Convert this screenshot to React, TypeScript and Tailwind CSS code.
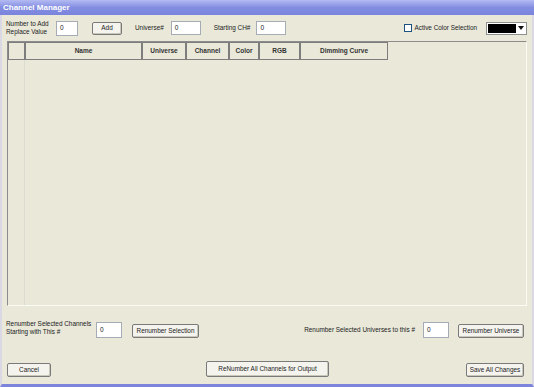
import React from "react";

const font = "font-['Liberation_Sans','Arial',sans-serif]";

function Btn({ label, className = "" }: { label: string; className?: string }) {
  return (
    <div
      className={`flex items-center justify-center whitespace-nowrap rounded-[2px] border border-[#7a7a7a] bg-[#f4f3ee] text-[6.4px] text-[#222] shadow-[inset_-1px_-1px_0_#c9c7ba] ${className}`}
    >
      {label}
    </div>
  );
}

function Field({ className = "" }: { className?: string }) {
  return (
    <div className={`flex items-center border border-[#a5acb5] bg-white pl-[3px] text-[6.5px] text-[#222] ${className}`}>
      0
    </div>
  );
}

const columns = [
  { name: "", w: "w-[17px]" },
  { name: "Name", w: "w-[117px]" },
  { name: "Universe", w: "w-[44px]" },
  { name: "Channel", w: "w-[43px]" },
  { name: "Color", w: "w-[30px]" },
  { name: "RGB", w: "w-[41px]" },
  { name: "Dimming Curve", w: "w-[88px]" },
];

export default function App() {
  return (
    <div className={`flex h-[387px] w-[534px] flex-col bg-[#e9e8d9] ${font}`}>
      {/* title bar */}
      <div className="flex h-[15px] items-center bg-gradient-to-b from-[#b4baf2] via-[#838de2] to-[#7a84dc] px-[3px] text-[8px] font-bold text-white">
        Channel Manager
      </div>

      <div className="flex flex-1 flex-col whitespace-nowrap border-x-2 border-b-[3px] border-x-[#d9d8e4] border-b-[#7c84dc] text-[6.4px] text-[#222]">
        {/* top row */}
        <div className="flex h-[26px] items-center">
          <div className="ml-[4px] w-[48px] leading-[8px]">
            Number to Add
            <br />
            Replace Value
          </div>
          <Field className="ml-[2px] h-[15px] w-[22px]" />
          <Btn label="Add" className="ml-[14px] h-[13px] w-[30px]" />
          <span className="ml-[13px]">Universe#</span>
          <Field className="ml-[7px] h-[14px] w-[30px]" />
          <span className="ml-[13px]">Starting CH#</span>
          <Field className="ml-[6px] h-[14px] w-[30px]" />
          <div className="ml-auto flex items-center">
            <div className="h-[8px] w-[8px] border border-[#1c5180] bg-white" />
            <span className="ml-[2px]">Active Color Selection</span>
          </div>
          <div className="ml-[9px] mr-[5px] flex h-[13px] w-[41px] items-center border border-[#8e8f8f] bg-white p-[1px]">
            <div className="h-full flex-1 bg-black" />
            <div className="flex h-full w-[9px] items-center justify-center">
              <svg width="6" height="4" viewBox="0 0 6 4">
                <path d="M0 0H6L3 4Z" fill="#111" />
              </svg>
            </div>
          </div>
        </div>

        {/* grid */}
        <div className="ml-[5px] mr-[5px] flex h-[265px] flex-col border border-[#8c8c8c] border-b-[#fbfbf6] border-r-[#fbfbf6]">
          <div className="flex h-[18px]">
            {columns.map((c, i) => (
              <div
                key={i}
                className={`${c.w} flex items-center justify-center border border-[#7d7d7d] bg-[#e9e8d9] text-[6.5px] font-bold text-[#333]`}
              >
                {c.name}
              </div>
            ))}
          </div>
          <div className="flex flex-1">
            <div className="w-[17px] border-r border-[#dcdbd0]" />
          </div>
        </div>

        {/* renumber row */}
        <div className="mt-[12px] flex h-[20px] items-center">
          <div className="ml-[4px] w-[86px] leading-[8px]">
            Renumber Selected Channels
            <br />
            Starting with This #
          </div>
          <Field className="ml-[4px] mt-[4px] h-[16px] w-[26px]" />
          <Btn label="Renumber Selection" className="ml-[10px] mt-[5px] h-[14px] w-[67px]" />
          <span className="ml-auto mt-[4px]">Renumber Selected Universes to this #</span>
          <Field className="ml-[8px] mt-[4px] h-[16px] w-[26px]" />
          <Btn label="Renumber Universe" className="ml-[9px] mr-[8px] mt-[5px] h-[14px] w-[66px]" />
        </div>

        {/* bottom row */}
        <div className="mt-[23px] flex items-center">
          <Btn label="Cancel" className="ml-[5px] mt-[2px] h-[14px] w-[44px]" />
          <Btn label="ReNumber All Channels for Output" className="ml-[155px] h-[16px] w-[123px]" />
          <Btn label="Save All Changes" className="ml-auto mr-[8px] mt-[2px] h-[14px] w-[58px]" />
        </div>
      </div>
    </div>
  );
}
